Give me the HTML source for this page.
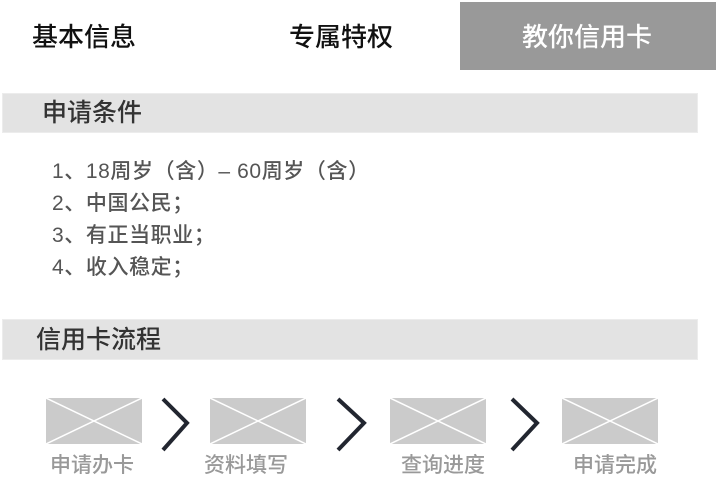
<!DOCTYPE html>
<html><head><meta charset="utf-8"><style>
*{margin:0;padding:0;box-sizing:border-box}
body{width:716px;height:504px;background:#fff;position:relative;overflow:hidden;font-family:"Liberation Sans","Noto Sans CJK SC",sans-serif}
.a{position:absolute;white-space:nowrap}
.tab{font-size:26px;color:#111;top:21px;line-height:32px;font-weight:500}
.bar{position:absolute;left:2px;width:696px;background:#e3e3e3;border:1px solid #ececec}
.bt{font-size:25px;color:#333;line-height:40px;font-weight:500}
.li{font-size:21px;color:#555;left:52px;line-height:28px;letter-spacing:0.6px;font-weight:500}
.img{position:absolute;top:398px;width:96px;height:46px}
.lab{font-size:21px;color:#999;top:452px;line-height:28px;font-weight:500}
</style></head><body>
<div class="a tab" style="left:32px">基本信息</div>
<div class="a tab" style="left:289px">专属特权</div>
<div class="a" style="left:460px;top:2px;width:256px;height:68px;background:#999"></div>
<div class="a tab" style="left:522px;color:#fff">教你信用卡</div>

<div class="bar" style="top:93px;height:40px"><div class="a bt" style="left:39px;top:-1px">申请条件</div></div>
<div class="a li" style="top:158px">1、18周岁（含）– 60周岁（含）</div>
<div class="a li" style="top:190px">2、中国公民；</div>
<div class="a li" style="top:222px">3、有正当职业；</div>
<div class="a li" style="top:254px">4、收入稳定；</div>

<div class="bar" style="top:319px;height:41px"><div class="a bt" style="left:33px;top:0">信用卡流程</div></div>

<svg class="img" style="left:46px" viewBox="0 0 96 46"><rect width="96" height="46" fill="#cbcbcb"/><path d="M0 0L96 46M96 0L0 46" stroke="#fff" stroke-width="1.5"/></svg>
<svg class="img" style="left:210px" viewBox="0 0 96 46"><rect width="96" height="46" fill="#cbcbcb"/><path d="M0 0L96 46M96 0L0 46" stroke="#fff" stroke-width="1.5"/></svg>
<svg class="img" style="left:390px" viewBox="0 0 96 46"><rect width="96" height="46" fill="#cbcbcb"/><path d="M0 0L96 46M96 0L0 46" stroke="#fff" stroke-width="1.5"/></svg>
<svg class="img" style="left:562px" viewBox="0 0 96 46"><rect width="96" height="46" fill="#cbcbcb"/><path d="M0 0L96 46M96 0L0 46" stroke="#fff" stroke-width="1.5"/></svg>

<svg class="a" style="left:0;top:0" width="716" height="504"><g fill="none" stroke="#222630" stroke-width="4">
<path d="M163 399L187 423L163 450"/>
<path d="M338 399L364 423L338 450"/>
<path d="M512 399L537 423L512 450"/></g></svg>

<div class="a lab" style="left:50px">申请办卡</div>
<div class="a lab" style="left:204px">资料填写</div>
<div class="a lab" style="left:401px">查询进度</div>
<div class="a lab" style="left:573px">申请完成</div>
</body></html>
